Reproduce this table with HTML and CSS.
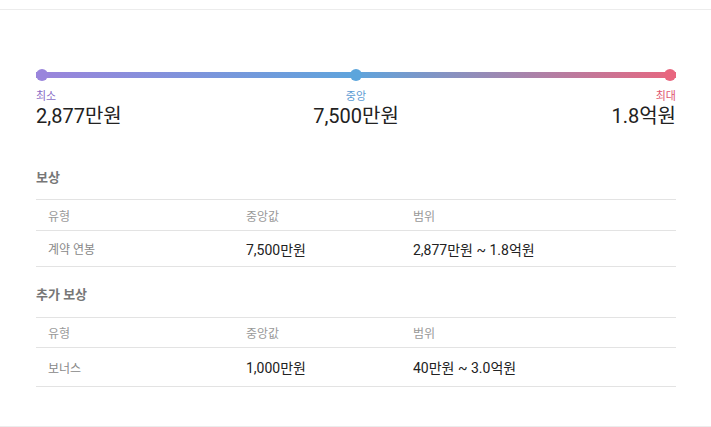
FILE: index.html
```html
<!DOCTYPE html>
<html lang="ko">
<head>
<meta charset="utf-8">
<link rel="stylesheet" href="styles.css">
</head>
<body>
<div class="card">
  <div class="range">
    <div class="track">
      <span class="dot dot-min"></span>
      <span class="dot dot-mid"></span>
      <span class="dot dot-max"></span>
    </div>
    <div class="labels">
      <div class="lab lab-min"><div class="cap">최소</div><div class="val">2,877만원</div></div>
      <div class="lab lab-mid"><div class="cap">중앙</div><div class="val">7,500만원</div></div>
      <div class="lab lab-max"><div class="cap">최대</div><div class="val">1.8억원</div></div>
    </div>
  </div>

  <h3 class="title t1">보상</h3>
  <div class="table">
    <div class="row head h1"><div class="c1">유형</div><div>중앙값</div><div>범위</div></div>
    <div class="row body b1"><div class="c1">계약 연봉</div><div>7,500만원</div><div>2,877만원 ~ 1.8억원</div></div>
  </div>

  <h3 class="title t2">추가 보상</h3>
  <div class="table">
    <div class="row head h2"><div class="c1">유형</div><div>중앙값</div><div>범위</div></div>
    <div class="row body b2"><div class="c1">보너스</div><div>1,000만원</div><div>40만원 ~ 3.0억원</div></div>
  </div>
</div>
</body>
</html>
```

FILE: styles.css
```css
html, body {
  margin: 0;
  padding: 0;
  background: #fff;
}
body {
  font-family: Roboto, "Noto Sans CJK KR", sans-serif;
  color: #222;
}
.card {
  margin-top: 9px;
  height: 416px;
  border-top: 1px solid #ececec;
  border-bottom: 1px solid #ececec;
  padding: 0 35px 0 36px;
}
.range {
  padding-top: 59px;
}
.track {
  height: 12px;
  display: flex;
  align-items: center;
  justify-content: space-between;
  background: linear-gradient(90deg, #9b84db 0%, #5fa4dc 50%, #e8667f 100%) no-repeat;
  background-size: 100% 6px;
  background-position: 0 50%;
  border-radius: 3px;
}
.dot {
  width: 12px;
  height: 12px;
  border-radius: 50%;
}
.dot-min { background: #9a85dc; }
.dot-mid { background: #5ca5dc; }
.dot-max { background: #e8667f; }
.labels {
  margin-top: 9px;
  display: grid;
  grid-template-columns: 1fr auto 1fr;
}
.lab-mid { text-align: center; }
.lab-max { text-align: right; }
.cap {
  font-size: 11px;
  line-height: 14px;
}
.lab-min .cap { color: #8a6cc6; }
.lab-mid .cap { color: #5b9bd3; }
.lab-max .cap { color: #e05670; }
.val {
  font-size: 20px;
  line-height: 24px;
  color: #222;
}
.title {
  margin: 0;
  font-size: 13px;
  line-height: 20px;
  font-weight: 700;
  color: #777;
}
.t1 { margin-top: 40px; margin-bottom: 11px; }
.t2 { margin-top: 18px; margin-bottom: 12px; }
.table {
  border-top: 1px solid #e3e3e3;
}
.row {
  display: grid;
  grid-template-columns: 198px 167px 1fr;
  align-items: center;
  border-bottom: 1px solid #e3e3e3;
}
.row > div {
  padding-left: 12px;
}
.head { font-size: 12px; color: #999; }
.h1 { height: 30px; }
.h2 { height: 29px; }
.b1 { height: 35px; }
.b2 { height: 38px; }
.body { font-size: 14px; color: #222; }
.body .c1 { font-size: 12px; color: #888; }
```
